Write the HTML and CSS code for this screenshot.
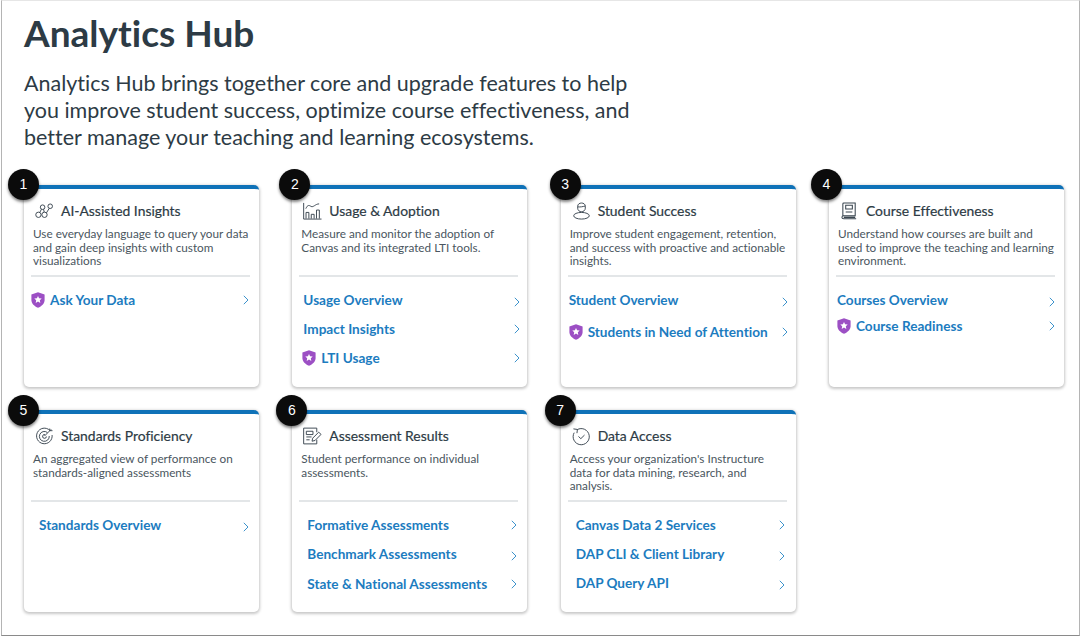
FILE: index.html
```html
<!DOCTYPE html>
<html lang="en">
<head>
  <meta charset="UTF-8">
  <title>Analytics Hub</title>
  <link rel="stylesheet" href="styles.css">
</head>
<body>
  <svg class="defs" width="0" height="0">
    <symbol id="shield" viewBox="0 0 14 16">
      <path d="M7 0.3 L13.6 2.6 V8 C13.6 11.6 10.6 14.3 7 15.8 C3.4 14.3 0.4 11.6 0.4 8 V2.6 Z" fill="#9c4fc4"/>
      <path d="M7 3.9 L8.1 6.3 L10.7 6.6 L8.8 8.3 L9.3 10.9 L7 9.6 L4.7 10.9 L5.2 8.3 L3.3 6.6 L5.9 6.3 Z" fill="#fff"/>
    </symbol>
    <symbol id="chev" viewBox="0 0 8 12">
      <path d="M1.8 1.8 L6 6 L1.8 10.2" fill="none" stroke="#3d93cc" stroke-width="1"/>
    </symbol>
  </svg>

  <div class="window">
    <h1>Analytics Hub</h1>
    <p class="intro">Analytics Hub brings together core and upgrade features to help you improve student success, optimize course effectiveness, and better manage your teaching and learning ecosystems.</p>

    <div class="cards">

      <section class="card">
        <span class="badge">1</span>
        <div class="card-head">
          <svg class="icon" viewBox="0 0 20 18"><g fill="none" stroke="#3a4650" stroke-width="1">
            <circle cx="3.6" cy="13" r="2.8"/><circle cx="10" cy="13" r="2.8"/><circle cx="8" cy="5" r="2.4"/><circle cx="16" cy="4" r="2.4"/>
            <path d="M5 10.6 L6.8 7.1 M9 7.2 L9.7 10.2 M12 11 L15 6.2"/></g></svg>
          <h2>AI-Assisted Insights</h2>
        </div>
        <p class="desc">Use everyday language to query your data and gain deep insights with custom visualizations</p>
        <div class="links links-flush inset-3">
          <a class="link link-pro"><svg class="shield"><use href="#shield"/></svg><span>Ask Your Data</span><svg class="chev"><use href="#chev"/></svg></a>
        </div>
      </section>

      <section class="card">
        <span class="badge badge-2">2</span>
        <div class="card-head">
          <svg class="icon" viewBox="0 0 20 18"><g fill="none" stroke="#3a4650" stroke-width="1">
            <path d="M0.7 0.5 V17.5 H19.5"/><path d="M3 6.5 C5 2 6.5 3 8.5 4.2 C11 5.5 13 1.5 17 1.5"/>
            <path d="M3.2 17 V10.5 H6.2 V17 M8.7 17 V12.5 H11.7 V17 M14.2 17 V8 H17.2 V17"/></g></svg>
          <h2>Usage &amp; Adoption</h2>
        </div>
        <p class="desc">Measure and monitor the adoption of Canvas and its integrated LTI tools.</p>
        <div class="links">
          <a class="link"><span>Usage Overview</span><svg class="chev chev-low"><use href="#chev"/></svg></a>
          <a class="link"><span>Impact Insights</span><svg class="chev"><use href="#chev"/></svg></a>
          <a class="link link-pro"><svg class="shield"><use href="#shield"/></svg><span>LTI Usage</span><svg class="chev"><use href="#chev"/></svg></a>
        </div>
      </section>

      <section class="card">
        <span class="badge badge-3">3</span>
        <div class="card-head">
          <svg class="icon" viewBox="0 0 20 18"><g fill="none" stroke="#3a4650" stroke-width="1">
            <path d="M6 6 V4 C6 1.8 8 0.6 10 0.6 C12 0.6 14 1.8 14 4 V6 C14 8.4 12 9.8 10 9.8 C8 9.8 6 8.4 6 6 Z"/><path d="M6 4.6 C9 5 11 4.4 14 3.8"/>
            <ellipse cx="10" cy="14" rx="8.2" ry="3.5"/></g></svg>
          <h2>Student Success</h2>
        </div>
        <p class="desc">Improve student engagement, retention, and success with proactive and actionable insights.</p>
        <div class="links links-flush links-wide inset-1">
          <a class="link"><span>Student Overview</span><svg class="chev chev-low"><use href="#chev"/></svg></a>
          <a class="link link-pro"><svg class="shield"><use href="#shield"/></svg><span>Students in Need of Attention</span><svg class="chev"><use href="#chev"/></svg></a>
        </div>
      </section>

      <section class="card">
        <span class="badge badge-4">4</span>
        <div class="card-head">
          <svg class="icon" viewBox="0 0 20 18"><g fill="none" stroke="#3a4650" stroke-width="1.1">
            <path d="M3 14 V1.5 C3 0.9 3.4 0.5 4 0.5 H16 V14 H4 C2.4 14 2 14.8 2 15.5 C2 16.4 2.6 17.2 4 17.2 H17"/>
            <path d="M6 3 H13 V7 H6 Z M6 10 H13"/><path d="M4 15.6 H16" stroke-width="1.6"/></g></svg>
          <h2>Course Effectiveness</h2>
        </div>
        <p class="desc">Understand how courses are built and used to improve the teaching and learning environment.</p>
        <div class="links links-flush links-tight inset-2">
          <a class="link"><span>Courses Overview</span><svg class="chev chev-low"><use href="#chev"/></svg></a>
          <a class="link link-pro"><svg class="shield"><use href="#shield"/></svg><span>Course Readiness</span><svg class="chev"><use href="#chev"/></svg></a>
        </div>
      </section>

      <section class="card">
        <span class="badge badge-low">5</span>
        <div class="card-head">
          <svg class="icon" viewBox="0 0 20 18"><g fill="none" stroke="#3a4650" stroke-width="1">
            <path d="M15.5 3 A8.2 8.2 0 1 0 18 8"/><path d="M13 5.3 A5.2 5.2 0 1 0 15 9"/><path d="M10.5 7.5 A2 2 0 1 0 12 9.5"/>
            <path d="M10 9 L17 2 M15.5 1.2 V3.4 H18.4"/></g></svg>
          <h2>Standards Proficiency</h2>
        </div>
        <p class="desc">An aggregated view of performance on standards-aligned assessments</p>
        <div class="links links-indent inset-3">
          <a class="link"><span>Standards Overview</span><svg class="chev chev-low"><use href="#chev"/></svg></a>
        </div>
      </section>

      <section class="card">
        <span class="badge badge-low">6</span>
        <div class="card-head">
          <svg class="icon" viewBox="0 0 20 18"><g fill="none" stroke="#3a4650" stroke-width="1">
            <path d="M14.5 5 V0.7 H0.7 V17.3 H14.5 V13"/><path d="M3.5 4 H10.5 V7.5 H3.5 Z M3.5 10 H9 M3.5 13 H7"/>
            <path d="M9.5 14.5 L10.2 11.3 L16.5 5 L19 7.3 L12.7 13.7 Z"/></g></svg>
          <h2>Assessment Results</h2>
        </div>
        <p class="desc">Student performance on individual assessments.</p>
        <div class="links links-indent inset-3">
          <a class="link"><span>Formative Assessments</span><svg class="chev"><use href="#chev"/></svg></a>
          <a class="link"><span>Benchmark Assessments</span><svg class="chev chev-low"><use href="#chev"/></svg></a>
          <a class="link link-drop"><span>State &amp; National Assessments</span><svg class="chev"><use href="#chev"/></svg></a>
        </div>
      </section>

      <section class="card">
        <span class="badge badge-low">7</span>
        <div class="card-head">
          <svg class="icon" viewBox="0 0 20 18"><g fill="none" stroke="#3a4650" stroke-width="1">
            <path d="M5.5 2.3 A8.5 8.5 0 1 1 2.3 5.5"/><path d="M1.5 1.5 L5.7 2.1 L5.2 6"/><path d="M6.8 9.5 L9.3 11.8 L13.2 8"/></g></svg>
          <h2>Data Access</h2>
        </div>
        <p class="desc">Access your organization's Instructure data for data mining, research, and analysis.</p>
        <div class="links links-indent inset-4">
          <a class="link"><span>Canvas Data 2 Services</span><svg class="chev"><use href="#chev"/></svg></a>
          <a class="link"><span>DAP CLI &amp; Client Library</span><svg class="chev chev-low"><use href="#chev"/></svg></a>
          <a class="link"><span>DAP Query API</span><svg class="chev chev-low"><use href="#chev"/></svg></a>
        </div>
      </section>

    </div>
  </div>
</body>
</html>
```

FILE: styles.css
```css
* {
  box-sizing: border-box;
}

html, body {
  margin: 0;
  padding: 0;
  background: #fff;
}

body {
  font-family: Lato, "Liberation Sans", sans-serif;
  font-variant-ligatures: none;
  color: #2d3b45;
}

.defs {
  position: absolute;
}

.window {
  width: 1079px;
  height: 636px;
  margin-left: 1px;
  padding: 13px 15px 0 22px;
  border-top: 1px solid #e6e6e6;
  border-left: 1px solid #b4b4b4;
  border-right: 1px solid #b4b4b4;
  border-bottom: 1px solid #8a8a8a;
  overflow: hidden;
}

h1 {
  margin: 0;
  font-size: 37px;
  line-height: 38px;
  font-weight: 700;
}

.intro {
  width: 620px;
  margin: 18px 0 0;
  font-size: 21.5px;
  line-height: 27px;
}

.cards {
  display: grid;
  grid-template-columns: repeat(4, 235px);
  grid-template-rows: 202px 202px;
  column-gap: 33.33px;
  row-gap: 23px;
  margin-top: 34px;
}

.card {
  position: relative;
  padding: 0 9px 0 7px;
  background: #fff;
  border-top: 4px solid #0f72b8;
  border-radius: 5px;
  box-shadow: 0 1px 3px 1px rgba(0, 0, 0, 0.22);
}

.badge {
  position: absolute;
  top: -20px;
  left: -16px;
  width: 31px;
  height: 31px;
  border-radius: 50%;
  background: #0b0b0b;
  color: #fff;
  font-family: "Liberation Sans", sans-serif;
  font-size: 14px;
  line-height: 31px;
  text-align: center;
  box-shadow: 0 2px 3px rgba(0, 0, 0, 0.5);
}

.badge-2 {
  left: -13px;
}

.badge-3 {
  left: -11px;
}

.badge-4 {
  left: -18px;
}

.badge-low {
  top: -19px;
}

.card-head {
  display: flex;
  align-items: center;
  gap: 7px;
  height: 18px;
  margin-top: 13px;
  padding-left: 4px;
}

.icon {
  flex: none;
  width: 19px;
  height: 18px;
  overflow: visible;
}

h2 {
  margin: 0;
  font-size: 13.9px;
  line-height: 18px;
  font-weight: 400;
  color: #2d3b45;
  -webkit-text-stroke: 0.2px #2d3b45;
}

.desc {
  height: 48px;
  margin: 7px 0 0;
  padding: 0 0 0 2px;
  font-size: 11.75px;
  line-height: 13.6px;
  color: #4a5660;
}

.links {
  display: flex;
  flex-direction: column;
  gap: 9px;
  padding: 13px 0 0 4px;
  border-top: 2px solid #e3e6e8;
}

.links-wide {
  gap: 12px;
}

.links-tight {
  gap: 6px;
}

.links-flush {
  padding-left: 1px;
}

.links-indent {
  padding-left: 8px;
}

.inset-1 {
  padding-right: 1px;
}

.inset-2 {
  padding-right: 2px;
}

.inset-3 {
  padding-right: 3px;
}

.inset-4 {
  padding-right: 4px;
}

.link {
  display: flex;
  align-items: center;
  height: 20px;
  font-size: 13.6px;
  font-weight: 700;
  color: #1c7cbf;
}

.link span {
  flex: 1;
}

.link-pro {
  margin-left: -1px;
}

.links-wide .link-pro,
.links-tight .link-pro {
  margin-left: 0;
}

.link-drop {
  margin-top: 1px;
  margin-bottom: -1px;
}

.shield {
  flex: none;
  width: 14px;
  height: 16px;
  margin-right: 5px;
}

.chev {
  flex: none;
  width: 8px;
  height: 12px;
  margin-right: -3px;
}

.chev-low {
  margin-top: 4px;
}
```
